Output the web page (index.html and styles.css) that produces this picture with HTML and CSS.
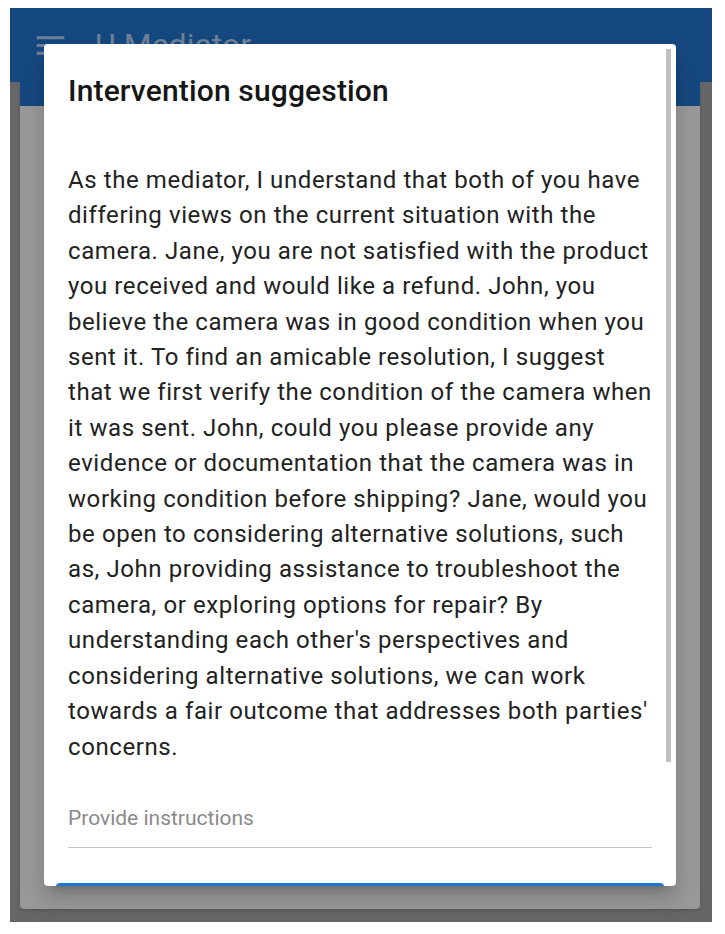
FILE: index.html
```html
<!DOCTYPE html>
<html lang="en">
<head>
<meta charset="utf-8">
<title>U Mediator</title>
<link rel="stylesheet" href="styles.css">
</head>
<body>
<div class="frame">
  <header class="appbar">
    <svg class="menu-icon" viewBox="0 0 24 24" aria-hidden="true"><path d="M3 18h18v-2H3v2zm0-5h18v-2H3v2zm0-7v2h18V6H3z"/></svg>
    <span class="brand">U Mediator</span>
  </header>
  <main class="page">
    <section class="card">
      <div class="card-band"></div>
    </section>
  </main>
  <div class="dialog" role="dialog" aria-labelledby="dlg-title">
    <div class="dialog-body">
      <h2 class="dialog-title" id="dlg-title">Intervention suggestion</h2>
      <p class="dialog-text">As the mediator, I understand that both of you have differing views on the current situation with the camera. Jane, you are not satisfied with the product you received and would like a refund. John, you believe the camera was in good condition when you sent it. To find an amicable resolution, I suggest that we first verify the condition of the camera when it was sent. John, could you please provide any evidence or documentation that the camera was in working condition before shipping? Jane, would you be open to considering alternative solutions, such as, John providing assistance to troubleshoot the camera, or exploring options for repair? By understanding each other's perspectives and considering alternative solutions, we can work towards a fair outcome that addresses both parties' concerns.</p>
      <div class="field">
        <label class="field-label">Provide instructions</label>
      </div>
      <div class="actions">
        <button class="btn" type="button" aria-label="Send"></button>
      </div>
    </div>
    <div class="scroll-thumb" aria-hidden="true"></div>
  </div>
</div>
</body>
</html>
```
FILE: styles.css
```css
html, body {
  margin: 0;
  padding: 0;
  background: #ffffff;
}

body {
  font-family: Roboto, "Noto Sans", "Liberation Sans", sans-serif;
}

.frame {
  position: relative;
  margin: 8px 0 0 10px;
  width: 702px;
  height: 914px;
  background: #666666;
  display: flex;
  flex-direction: column;
}

.appbar {
  height: 74px;
  flex: none;
  background: #15487f;
  display: flex;
  align-items: center;
  padding-left: 22px;
  gap: 26px;
  color: #6f8196;
}

.menu-icon {
  width: 37px;
  height: 37px;
  fill: #6f8196;
  flex: none;
}

.brand {
  font-size: 32px;
  font-weight: 400;
  line-height: 1;
  white-space: nowrap;
}

.page {
  flex: 1;
  display: flex;
  padding: 0 12px 13px 10px;
}

.card {
  flex: 1;
  background: #999999;
  border-radius: 0 0 4px 4px;
  box-shadow: 0 2px 3px rgba(0, 0, 0, 0.15);
}

.card-band {
  height: 24px;
  background: #15487f;
}

.dialog {
  position: absolute;
  left: 34px;
  top: 36px;
  width: 632px;
  height: 842px;
  background: #ffffff;
  border-radius: 4px;
  overflow: hidden;
  box-shadow: 0 8px 12px -6px rgba(0, 0, 0, 0.25), 0 14px 24px 2px rgba(0, 0, 0, 0.12);
}

.dialog-body {
  height: 100%;
  overflow-y: auto;
  scrollbar-width: none;
}

.scroll-thumb {
  position: absolute;
  top: 5px;
  right: 5px;
  width: 5px;
  height: 713px;
  background: #c1c1c1;
}

.dialog-title {
  margin: 0;
  padding: 27px 24px 0 24px;
  font-size: 30px;
  font-weight: 500;
  line-height: 40px;
  letter-spacing: 0.15px;
  color: #161616;
}

.dialog-text {
  margin: 0;
  padding: 52px 24px 0 24px;
  font-size: 24px;
  line-height: 35.4px;
  letter-spacing: 0.58px;
  color: #222222;
}

.field {
  margin: 39px 24px 0 24px;
  padding-bottom: 15px;
  border-bottom: 1px solid #c4c4c4;
}

.field-label {
  display: block;
  font-size: 21px;
  line-height: 28px;
  color: #8a8a8a;
}

.actions {
  padding: 35px 12px 104px 12px;
}

.btn {
  display: block;
  width: 100%;
  height: 44px;
  border: 0;
  border-radius: 4px;
  background: #1976d2;
}
```
